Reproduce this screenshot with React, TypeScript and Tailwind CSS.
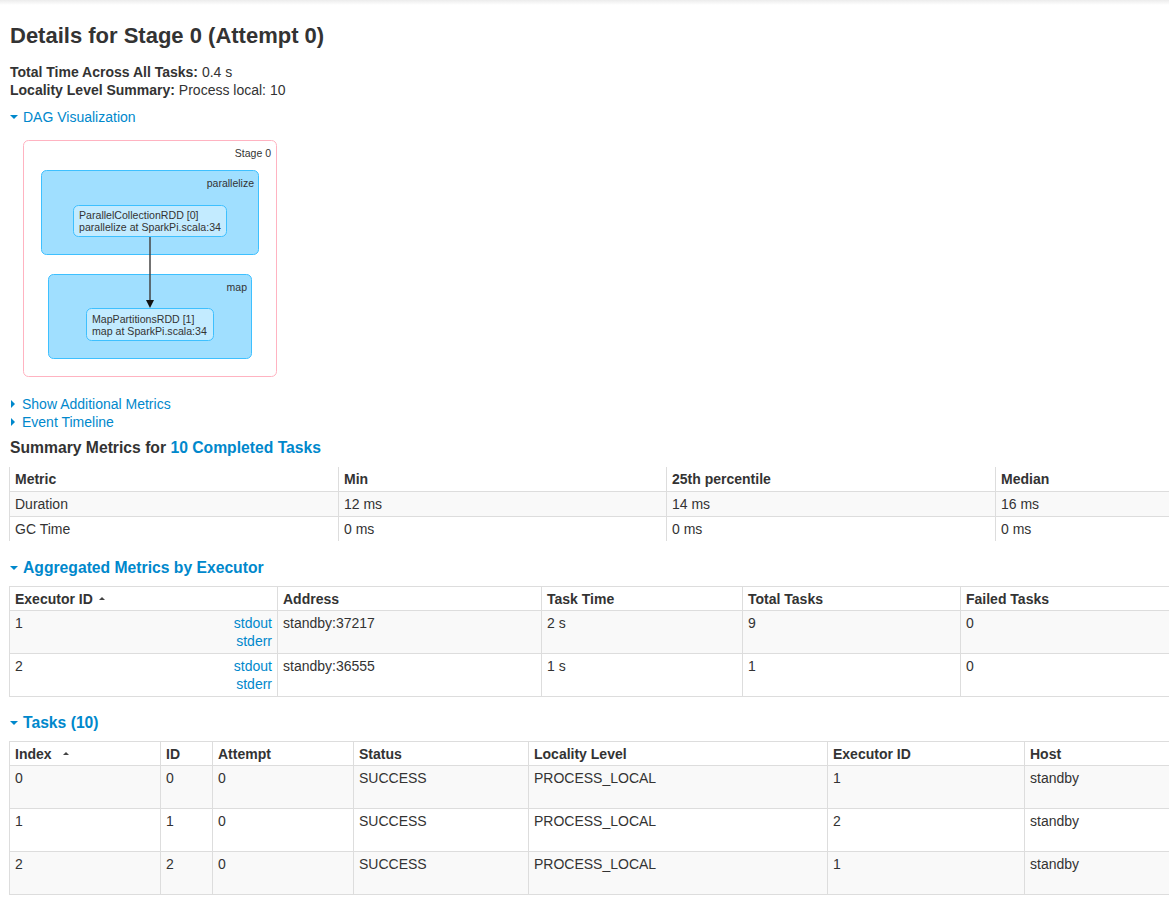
import React from 'react';

const link = 'text-[#0088cc]';

function CaretDown() {
  return (
    <span className="inline-block align-middle w-0 h-0 border-l-[4px] border-r-[4px] border-t-[4px] border-l-transparent border-r-transparent border-t-[#0088cc] mr-[5px] mb-[2px]" />
  );
}

function CaretRight() {
  return (
    <span className="inline-block align-middle w-0 h-0 border-t-[4px] border-b-[4px] border-l-[4px] border-t-transparent border-b-transparent border-l-[#0088cc] ml-px mr-[7px] mb-[2px]" />
  );
}

function SortUp() {
  return (
    <span className="inline-block align-middle w-0 h-0 border-l-[3px] border-r-[3px] border-b-[3px] border-l-transparent border-r-transparent border-b-[#444] mb-[3px]" />
  );
}

function Dag() {
  return (
    <svg width="262" height="243" className="block ml-[11px] mt-[11px]">
      <rect x="3.5" y="3.5" width="253" height="236" rx="5" fill="#fff" stroke="#ffb3c1" />
      <text x="251" y="20" textAnchor="end" fontSize="10.5" fill="#333" fontFamily="Liberation Sans, Arial, sans-serif">
        Stage 0
      </text>
      <rect x="21.5" y="33.5" width="217" height="84" rx="5" fill="#a0dfff" stroke="#3ec0ff" />
      <text x="234" y="50" textAnchor="end" fontSize="10.5" fill="#333" fontFamily="Liberation Sans, Arial, sans-serif">
        parallelize
      </text>
      <rect x="53.5" y="68.5" width="153" height="31" rx="5" fill="#c3ebff" stroke="#3ec0ff" />
      <text x="59" y="82" fontSize="10.6" fill="#333" fontFamily="Liberation Sans, Arial, sans-serif">
        ParallelCollectionRDD [0]
      </text>
      <text x="59" y="94" fontSize="10.6" fill="#333" fontFamily="Liberation Sans, Arial, sans-serif">
        parallelize at SparkPi.scala:34
      </text>
      <rect x="28.5" y="137.5" width="203" height="84" rx="5" fill="#a0dfff" stroke="#3ec0ff" />
      <text x="227" y="154" textAnchor="end" fontSize="10.5" fill="#333" fontFamily="Liberation Sans, Arial, sans-serif">
        map
      </text>
      <rect x="66.5" y="171.5" width="127" height="32" rx="5" fill="#c3ebff" stroke="#3ec0ff" />
      <text x="72" y="186" fontSize="10.6" fill="#333" fontFamily="Liberation Sans, Arial, sans-serif">
        MapPartitionsRDD [1]
      </text>
      <text x="72" y="198" fontSize="10.6" fill="#333" fontFamily="Liberation Sans, Arial, sans-serif">
        map at SparkPi.scala:34
      </text>
      <line x1="130" y1="100" x2="130" y2="164" stroke="#444" strokeWidth="1.5" />
      <path d="M126 163 L134 163 L130 171 Z" fill="#111" />
    </svg>
  );
}

const th = 'border-l border-[#ddd] px-[5px] py-[3px] text-left font-bold align-top';
const th2 = 'border-l border-[#ddd] px-[5px] pt-[3px] pb-[2px] text-left font-bold align-top';
const td = 'border-l border-t border-[#ddd] px-[5px] py-[3px] align-top';

function SummaryTable() {
  const cols: [string, number][] = [
    ['Metric', 329],
    ['Min', 328],
    ['25th percentile', 329],
    ['Median', 174],
  ];
  const rows = [
    ['Duration', '12 ms', '14 ms', '16 ms'],
    ['GC Time', '0 ms', '0 ms', '0 ms'],
  ];
  return (
    <table className="table-fixed border-collapse w-[1160px] mt-[9px]">
      <colgroup>
        {cols.map(([c, w]) => (
          <col key={c} style={{ width: w }} />
        ))}
      </colgroup>
      <thead>
        <tr>
          {cols.map(([c]) => (
            <th key={c} className={th}>
              {c}
            </th>
          ))}
        </tr>
      </thead>
      <tbody>
        {rows.map((r, i) => (
          <tr key={i} className={i % 2 === 0 ? 'bg-[#f9f9f9]' : 'bg-white'}>
            {r.map((v, j) => (
              <td key={j} className={td}>
                {v}
              </td>
            ))}
          </tr>
        ))}
      </tbody>
    </table>
  );
}

function ExecutorTable() {
  const cols: [string, number][] = [
    ['Executor ID', 268],
    ['Address', 264],
    ['Task Time', 201],
    ['Total Tasks', 218],
    ['Failed Tasks', 209],
  ];
  const rows = [
    ['1', 'standby:37217', '2 s', '9', '0'],
    ['2', 'standby:36555', '1 s', '1', '0'],
  ];
  return (
    <table className="table-fixed border-collapse border-t border-[#ddd] w-[1160px] mt-[8px]">
      <colgroup>
        {cols.map(([c, w]) => (
          <col key={c} style={{ width: w }} />
        ))}
      </colgroup>
      <thead>
        <tr>
          {cols.map(([c]) => (
            <th key={c} className={th2}>
              {c}
              {c === 'Executor ID' && (
                <span className="ml-[6px]">
                  <SortUp />
                </span>
              )}
            </th>
          ))}
        </tr>
      </thead>
      <tbody>
        {rows.map((r, i) => (
          <tr key={i} className={(i % 2 === 0 ? 'bg-[#f9f9f9]' : 'bg-white') + ' border-b border-[#ddd]'}>
            {r.map((v, j) => (
              <td key={j} className={td}>
                {j === 0 ? (
                  <div className="flex justify-between">
                    <span>{v}</span>
                    <span className={`${link} flex flex-col items-end`}>
                      <span>stdout</span>
                      <span>stderr</span>
                    </span>
                  </div>
                ) : (
                  v
                )}
              </td>
            ))}
          </tr>
        ))}
      </tbody>
    </table>
  );
}

function TasksTable() {
  const cols: [string, number][] = [
    ['Index', 151],
    ['ID', 52],
    ['Attempt', 141],
    ['Status', 175],
    ['Locality Level', 299],
    ['Executor ID', 197],
    ['Host', 145],
  ];
  const rows = [
    ['0', '0', '0', 'SUCCESS', 'PROCESS_LOCAL', '1', 'standby'],
    ['1', '1', '0', 'SUCCESS', 'PROCESS_LOCAL', '2', 'standby'],
    ['2', '2', '0', 'SUCCESS', 'PROCESS_LOCAL', '1', 'standby'],
  ];
  return (
    <table className="table-fixed border-collapse border-t border-b border-[#ddd] w-[1160px] mt-[8px]">
      <colgroup>
        {cols.map(([c, w]) => (
          <col key={c} style={{ width: w }} />
        ))}
      </colgroup>
      <thead>
        <tr>
          {cols.map(([c]) => (
            <th key={c} className={th2}>
              {c}
              {c === 'Index' && (
                <span className="ml-[11px]">
                  <SortUp />
                </span>
              )}
            </th>
          ))}
        </tr>
      </thead>
      <tbody>
        {rows.map((r, i) => (
          <tr key={i} className={i % 2 === 0 ? 'bg-[#f9f9f9]' : 'bg-white'}>
            {r.map((v, j) => (
              <td key={j} className={td}>
                <div className="h-[36px]">{v}</div>
              </td>
            ))}
          </tr>
        ))}
      </tbody>
    </table>
  );
}

export default function App() {
  return (
    <div className="w-[1169px] h-[897px] overflow-hidden bg-white text-[#333] font-['Liberation_Sans',Arial,sans-serif] text-[14px] leading-[18px]">
      <div className="h-[5px] bg-gradient-to-b from-[#ececec] to-white" />
      <div className="pl-[9px]">
        <h3 className="text-[22px] font-bold leading-[40px] mt-[11px] pl-px">Details for Stage 0 (Attempt 0)</h3>
        <div className="mt-[7px] pl-px">
          <div>
            <span className="font-bold">Total Time Across All Tasks:</span> 0.4 s
          </div>
          <div>
            <span className="font-bold">Locality Level Summary:</span> Process local: 10
          </div>
        </div>
        <div className={`mt-[9px] pl-px ${link}`}>
          <CaretDown />
          DAG Visualization
        </div>
        <Dag />
        <div className={`mt-[15px] pl-px ${link}`}>
          <div>
            <CaretRight />
            Show Additional Metrics
          </div>
          <div>
            <CaretRight />
            Event Timeline
          </div>
        </div>
        <h4 className="mt-[7px] pl-px text-[15.7px] font-bold leading-[20px]">
          Summary Metrics for <span className={link}>10 Completed Tasks</span>
        </h4>
        <SummaryTable />
        <h4 className={`mt-[17px] pl-px text-[15.7px] font-bold leading-[20px] ${link}`}>
          <CaretDown />
          Aggregated Metrics by Executor
        </h4>
        <ExecutorTable />
        <h4 className={`mt-[16px] pl-px text-[15.7px] font-bold leading-[20px] ${link}`}>
          <CaretDown />
          Tasks (10)
        </h4>
        <TasksTable />
      </div>
    </div>
  );
}
